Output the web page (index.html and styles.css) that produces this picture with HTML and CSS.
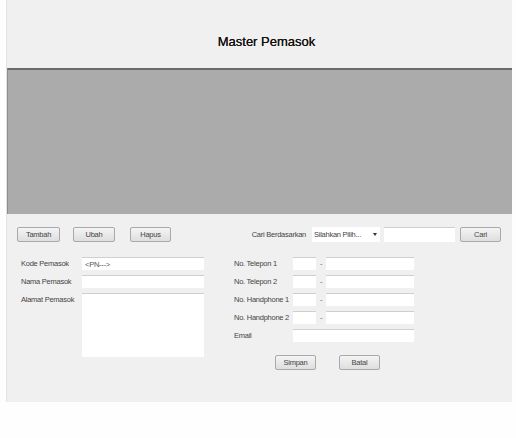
FILE: index.html
```html
<!DOCTYPE html>
<html lang="en">
<head>
    <meta charset="UTF-8">
    <meta name="viewport" content="width=device-width, initial-scale=1.0">
    <title>Master Pemasok</title>
    <link rel="stylesheet" href="styles.css">
</head>
<body>

    <!-- Form Window -->
    <div class="window">

        <!-- Title -->
        <div class="header">
            <h1 class="title">Master Pemasok</h1>
        </div>

        <!-- Data Grid -->
        <div class="grid-view"></div>

        <!-- Toolbar -->
        <div class="toolbar">
            <div class="toolbar-left">
                <button class="btn btn-tambah">Tambah</button>
                <button class="btn btn-ubah">Ubah</button>
                <button class="btn btn-hapus">Hapus</button>
            </div>
            <div class="toolbar-right">
                <span class="label">Cari Berdasarkan</span>
                <div class="combo">
                    <span>Silahkan Pilih...</span>
                    <span class="combo-arrow"></span>
                </div>
                <input class="input search-input" type="text">
                <button class="btn btn-cari">Cari</button>
            </div>
        </div>

        <!-- Fields -->
        <div class="fields">
            <div class="col-left">
                <span class="label">Kode Pemasok</span>
                <input class="input" type="text" value="<PN--->">
                <span class="label">Nama Pemasok</span>
                <input class="input" type="text">
                <span class="label">Alamat Pemasok</span>
                <textarea class="input textarea"></textarea>
            </div>

            <div class="col-right">
                <div class="phone-grid">
                    <span class="label">No. Telepon 1</span>
                    <input class="input" type="text">
                    <span class="dash">-</span>
                    <input class="input" type="text">

                    <span class="label">No. Telepon 2</span>
                    <input class="input" type="text">
                    <span class="dash">-</span>
                    <input class="input" type="text">

                    <span class="label">No. Handphone 1</span>
                    <input class="input" type="text">
                    <span class="dash">-</span>
                    <input class="input" type="text">

                    <span class="label">No. Handphone 2</span>
                    <input class="input" type="text">
                    <span class="dash">-</span>
                    <input class="input" type="text">

                    <span class="label">Email</span>
                    <input class="input email-input" type="text">
                </div>

                <div class="actions">
                    <button class="btn btn-simpan">Simpan</button>
                    <button class="btn btn-batal">Batal</button>
                </div>
            </div>
        </div>

    </div>

</body>
</html>
```

FILE: styles.css
```css
body, html {
    margin: 0;
    padding: 0;
    background: #fefefe;
    font-family: 'Liberation Sans', Arial, sans-serif;
}

/* Window */
.window {
    width: 506px;
    height: 402px;
    margin-left: 6px;
    background: #f0f0f0;
    box-sizing: border-box;
    border-left: 1px solid #e4e4e4;
}

.header {
    height: 68px;
    box-sizing: border-box;
    padding: 34px 0 0 14px;
    text-align: center;
}

.title {
    margin: 0;
    font-size: 13px;
    font-weight: normal;
    line-height: 16px;
    color: #111;
    text-shadow: 0 0 0.5px #111;
}

/* Data Grid */
.grid-view {
    height: 146px;
    background: #ababab;
    border-top: 2px solid #6a6a6a;
    border-left: 1px solid #8c8c8c;
    box-sizing: border-box;
}

/* Shared controls */
.label,
.input,
.btn,
.combo,
.dash {
    font-family: 'Liberation Sans', Arial, sans-serif;
    font-size: 7.5px;
    letter-spacing: -0.25px;
}

.label {
    color: #444;
    line-height: 13px;
    white-space: nowrap;
}

.input {
    display: block;
    margin: 0;
    padding: 0 3px;
    height: 13px;
    box-sizing: border-box;
    background: #fff;
    border: none;
    border-top: 1px solid #cfcfcf;
    color: #555;
    outline: none;
}

.btn {
    height: 15px;
    padding: 0;
    box-sizing: border-box;
    border: 1px solid #a9a9a9;
    border-radius: 2px;
    background: linear-gradient(#f4f4f4, #dedede);
    color: #444;
}

/* Toolbar */
.toolbar {
    display: flex;
    justify-content: space-between;
    align-items: center;
    margin-top: 13px;
    padding: 0 11px 0 10px;
}

.toolbar-left {
    display: flex;
}

.btn-tambah { width: 43px; }
.btn-ubah { width: 42px; margin-left: 13px; }
.btn-hapus { width: 41px; margin-left: 15px; }

.toolbar-right {
    display: flex;
    align-items: center;
}

.combo {
    display: flex;
    justify-content: space-between;
    align-items: center;
    width: 68px;
    height: 15px;
    margin-left: 6px;
    padding: 0 3px 0 2px;
    box-sizing: border-box;
    background: #fff;
    color: #444;
}

.combo-arrow {
    width: 0;
    height: 0;
    border-left: 2px solid transparent;
    border-right: 2px solid transparent;
    border-top: 3px solid #333;
}

.search-input {
    width: 71px;
    height: 15px;
    margin-left: 4px;
}

.btn-cari {
    width: 41px;
    margin-left: 5px;
}

/* Fields */
.fields {
    display: flex;
    margin-top: 15px;
    padding-left: 14px;
}

.col-left {
    display: grid;
    grid-template-columns: 61px 122px;
    grid-template-rows: 13px 13px 64px;
    row-gap: 5px;
    align-items: start;
}

.textarea {
    height: 64px;
    resize: none;
}

.col-right {
    margin-left: 30px;
}

.phone-grid {
    display: grid;
    grid-template-columns: 59px 23px 10px 88px;
    grid-auto-rows: 13px;
    row-gap: 5px;
}

.dash {
    line-height: 13px;
    color: #666;
    text-align: center;
}

.email-input {
    grid-column: 2 / 5;
}

.actions {
    display: flex;
    margin-top: 13px;
    padding-left: 41px;
}

.btn-simpan { width: 41px; }
.btn-batal { width: 41px; margin-left: 23px; }
```
